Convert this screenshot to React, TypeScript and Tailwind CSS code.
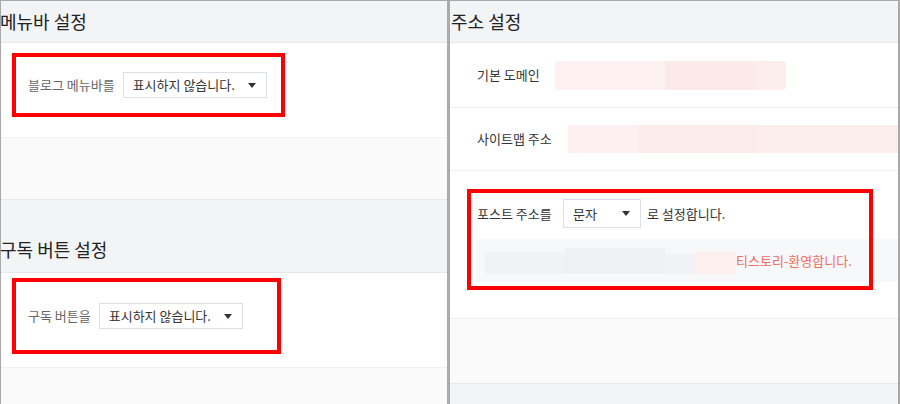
import React from "react";

const font = { fontFamily: '"Noto Sans CJK KR", "Noto Sans", sans-serif' };

function Caret() {
  return (
    <svg width="8" height="5" viewBox="0 0 8 5" className="shrink-0">
      <path d="M0 0h8L4 5z" fill="#333" />
    </svg>
  );
}

function Select({ label, width, height }: { label: string; width: string; height: string }) {
  return (
    <div
      className={`flex ${height} ${width} items-center justify-between border border-[#dcdfe4] bg-white pl-[9px] pr-[10px] text-[13px] text-[#333]`}
    >
      <span>{label}</span>
      <Caret />
    </div>
  );
}

export default function App() {
  return (
    <div
      style={font}
      className="flex h-[404px] w-[900px] overflow-hidden border-t border-[#a9a9a9] bg-white"
    >
      {/* left panel */}
      <div className="flex w-[447px] flex-col border-l border-[#a9a9a9]">
        <div className="flex h-[42px] items-center border-b border-[#e6e8ec] bg-[#f3f4f6]">
          <h2 className="-ml-px text-[18px] text-[#222]">메뉴바 설정</h2>
        </div>
        <div className="h-[95px] border-b border-[#f0f0f2] bg-white pl-[11px] pt-[10px]">
          <div className="flex h-[64px] w-[273px] items-center gap-[8px] border-4 border-[#ff0000] pl-[12px]">
            <span className="text-[13px] text-[#666]">블로그 메뉴바를</span>
            <Select label="표시하지 않습니다." width="w-[144px]" height="h-[26px]" />
          </div>
        </div>
        <div className="h-[62px] border-b border-[#e8e9ee] bg-[#fafafa]" />
        <div className="flex h-[73px] items-end border-b border-[#e6e8ec] bg-[#f3f4f6] pb-[9px]">
          <h2 className="-ml-px text-[18px] text-[#222]">구독 버튼 설정</h2>
        </div>
        <div className="h-[95px] border-b border-[#f0f0f2] bg-white pl-[11px] pt-[5px]">
          <div className="flex h-[76px] w-[269px] items-center gap-[8px] border-4 border-[#ff0000] pl-[12px]">
            <span className="text-[13px] text-[#666]">구독 버튼을</span>
            <Select label="표시하지 않습니다." width="w-[144px]" height="h-[26px]" />
          </div>
        </div>
        <div className="flex-1 bg-[#fafafa]" />
      </div>

      {/* divider */}
      <div className="w-[3px] bg-[#ababab]" />

      {/* right panel */}
      <div className="relative flex flex-1 flex-col border-r-2 border-[#a9a9a9]">
        <div className="flex h-[42px] items-center border-b border-[#e6e8ec] bg-[#f3f4f6] pl-px">
          <h2 className="text-[18px] text-[#222]">주소 설정</h2>
        </div>
        <div className="flex h-[65px] items-center border-b border-[#f0f0f2] pl-[27px]">
          <span className="w-[78px] text-[13px] text-[#333]">기본 도메인</span>
          <div className="flex h-[29px] w-[231px] rounded-sm bg-[#fdeeee]">
            <div className="h-full w-[110px] bg-[#fdf1f1]" />
            <div className="h-full w-[90px] bg-[#fce9e9]" />
          </div>
        </div>
        <div className="flex h-[63px] items-center border-b border-[#f0f0f2] pl-[27px]">
          <span className="w-[91px] text-[13px] text-[#333]">사이트맵 주소</span>
          <div className="flex h-[28px] flex-1 bg-[#fdeeee]">
            <div className="h-full w-[70px] bg-[#fdf0f0]" />
            <div className="h-full w-[120px] bg-[#fcebeb]" />
          </div>
        </div>
        <div className="h-[148px] border-b border-[#f0f0f2] pl-[27px] pt-[28px]">
          <div className="flex items-center">
            <span className="w-[86px] text-[13px] text-[#333]">포스트 주소를</span>
            <Select label="문자" width="w-[78px]" height="h-[29px]" />
            <span className="ml-[6px] text-[13px] text-[#333]">로 설정합니다.</span>
          </div>
          <div className="mt-[11px] flex h-[43px] items-center bg-[#f7f8fa] pl-[8px]">
            <div className="flex h-[26px] w-[251px] items-end">
              <div className="h-[22px] w-[80px] bg-[#f1f2f5]" />
              <div className="h-[26px] w-[100px] bg-[#eef0f3]" />
              <div className="h-[20px] w-[30px] bg-[#f1f2f5]" />
              <div className="h-[22px] w-[41px] bg-[#fcefee]" />
            </div>
            <span className="text-[13px] text-[#f26d60]">티스토리-환영합니다.</span>
          </div>
        </div>
        <div className="h-[65px] border-b border-[#e8e9ee] bg-[#fafafa]" />
        <div className="flex-1 bg-[#f3f4f6]" />

        {/* annotation */}
        <div className="pointer-events-none absolute left-[17px] top-[188px] h-[101px] w-[406px] border-4 border-[#ff0000]" />
      </div>
    </div>
  );
}
